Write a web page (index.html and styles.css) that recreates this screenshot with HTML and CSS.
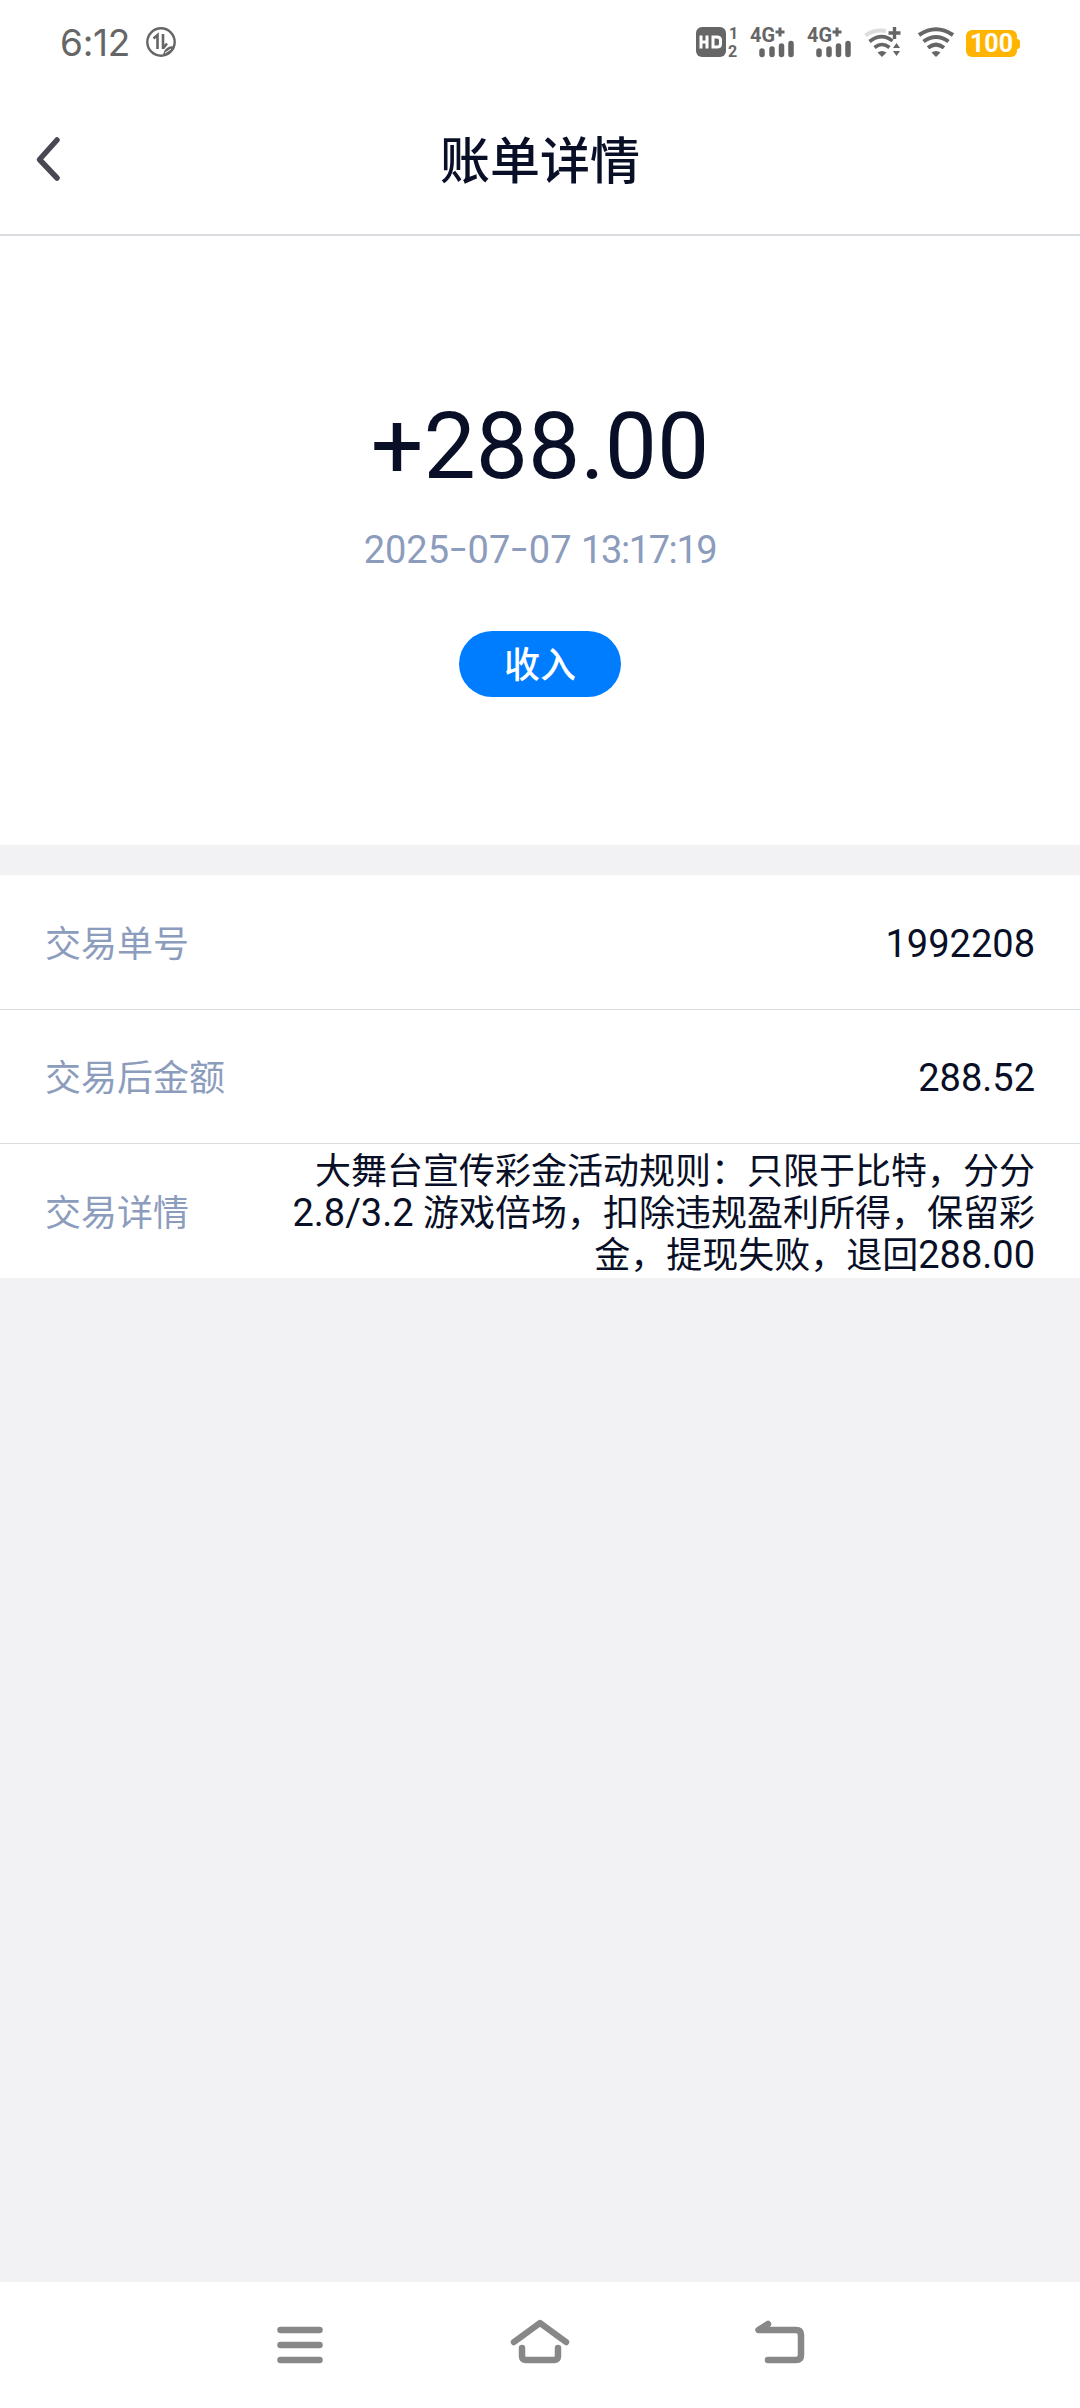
FILE: index.html
```html
<!DOCTYPE html>
<html lang="zh-CN">
<head>
    <meta charset="UTF-8">
    <meta name="viewport" content="width=device-width, initial-scale=1.0">
    <title>账单详情</title>
    <link rel="stylesheet" href="styles.css">
</head>
<body>
    <div class="status-bar">
        <span class="time">6:12</span>
        <svg class="data-icon" width="32" height="32" viewBox="0 0 32 32">
            <circle cx="16" cy="16" r="13.7" fill="none" stroke="#666" stroke-width="2.4"/>
            <path d="M8.500 12.500l4-3.500v14M18 8v15M18 22.500l4-5" fill="none" stroke="#666" stroke-width="2.600"/>
            <path d="M18 29c1-6 5-9 11-9-1 5-5 9-11 9z" fill="#666"/>
            <path d="M20 27l6-4" stroke="#fff" stroke-width="1"/>
        </svg>
        <div class="status-icons">
            <svg width="44" height="32" viewBox="0 0 44 32">
                <rect x="0" y="1" width="30" height="30" rx="6" fill="#666"/>
                <path d="M5 9.500v13M11 9.500v13M5 16h6M17 11h4q3.500 0 3.500 3v4q0 3-3.500 3h-4z" fill="none" stroke="#fff" stroke-width="3"/>
                <text class="sim" x="33" y="13">1</text>
                <text class="sim" x="32" y="31">2</text>
            </svg>
            <svg class="signal" width="45" height="32" viewBox="0 0 45 32">
                <text class="net" x="0" y="16" textLength="25" lengthAdjust="spacingAndGlyphs">4G</text>
                <path class="plus" d="M30 1.500v9M25.500 6h9"/>
                <path class="bars" d="M12 25v3.500M22 23v5.500M31.500 20v8.500M41 17.500v11"/>
            </svg>
            <svg class="signal second" width="45" height="32" viewBox="0 0 45 32">
                <text class="net" x="0" y="16" textLength="25" lengthAdjust="spacingAndGlyphs">4G</text>
                <path class="plus" d="M30 1.500v9M25.500 6h9"/>
                <path class="bars" d="M12 25v3.500M22 23v5.500M31.500 20v8.500M41 17.500v11"/>
            </svg>
            <svg class="wifi-plus" width="38" height="32" viewBox="0 0 38 32">
                <path d="M1.500 9.500Q10 3 22 5" fill="none" stroke="#ddd" stroke-width="4"/>
                <path d="M5.500 15.500Q18 6 28.500 15M10.500 21.500Q18 15.500 25.500 21.500" fill="none" stroke="#666" stroke-width="3.6"/>
                <path d="M13.500 26.500Q18 23.500 22.500 26.500L18 31z" fill="#666"/>
                <path d="M30.500 1v12M24.500 7h12" stroke="#666" stroke-width="3.4"/>
                <path d="M29 22l3.500-5 3.500 5zM29 25h7l-3.500 5z" fill="#666"/>
            </svg>
            <svg class="wifi" width="38" height="32" viewBox="0 0 38 32">
                <path d="M2 9Q19-2.500 36 9M6.500 15.500Q19 6.500 31.500 15.500M11 21.800Q19 15.500 27 21.800" fill="none" stroke="#666" stroke-width="4"/>
                <path d="M14.500 26.500Q19 23.500 23.500 26.500L19 31z" fill="#666"/>
            </svg>
            <div class="battery">100</div>
        </div>
    </div>

    <header class="header">
        <svg class="back" width="28" height="46" viewBox="0 0 28 46">
            <path d="M23 4L5.500 23.500 23 42" fill="none" stroke="#484852" stroke-width="5.500" stroke-linecap="round" stroke-linejoin="round"/>
        </svg>
        <h1>账单详情</h1>
    </header>

    <section class="summary">
        <div class="amount">+288.00</div>
        <div class="date">2025<i>-</i>07<i>-</i>07 <span class="clock">13:17:19</span></div>
        <div class="tag">收入</div>
    </section>

    <section class="details">
        <div class="row">
            <span class="label">交易单号</span>
            <span class="value"><span class="num">1992208</span></span>
        </div>
        <div class="row">
            <span class="label">交易后金额</span>
            <span class="value"><span class="num">288.52</span></span>
        </div>
        <div class="row">
            <span class="label">交易详情</span>
            <span class="value">大舞台宣传彩金活动规则：只限于比特，分分<br><span class="num">2.8/3.2 </span>游戏倍场，扣除违规盈利所得，保留彩<br>金，提现失败，退回<span class="num">288.00</span></span>
        </div>
    </section>

    <nav class="nav-bar">
        <svg width="60" height="50" viewBox="0 0 60 50">
            <path d="M10.500 13h39M10.500 28h39M10.500 43h39"/>
        </svg>
        <svg width="60" height="50" viewBox="0 0 60 50">
            <path d="M4 25L30 6l26 19M12 31v8q0 4 4 4h28q4 0 4-4v-8"/>
        </svg>
        <svg width="60" height="50" viewBox="0 0 60 50">
            <path d="M18 7L8.500 13H46q5 0 5 5v20q0 5-5 5H18"/>
        </svg>
    </nav>
</body>
</html>
```
FILE: styles.css
```css
* {
    box-sizing: border-box;
}
body {
    background: #f2f2f5;
    color: #080f26;
    font-family: Roboto, 'Noto Sans CJK SC', sans-serif;
    display: flex;
    flex-direction: column;
    height: 2408px;
    margin: 0;
}
svg {
    display: block;
    flex: none;
    overflow: visible;
}
.status-bar {
    background: #fff;
    height: 84px;
    display: flex;
    align-items: center;
    padding: 0 60px;
    color: #666;
}
.time {
    font-family: Inter, sans-serif;
    font-size: 37px;
    letter-spacing: -0.3px;
    width: 85px;
}
.status-icons {
    display: flex;
    align-items: center;
    margin-left: auto;
}
.sim {
    font: 700 16px/1 Roboto, sans-serif;
    fill: #666;
}
.net {
    font: 700 20px/1 Roboto, sans-serif;
    fill: #666;
}
.plus {
    stroke: #666;
    stroke-width: 3;
}
.bars {
    fill: none;
    stroke: #666;
    stroke-width: 5.5;
    stroke-linecap: round;
}
.signal {
    margin-left: 10px;
}
.second,
.wifi-plus {
    margin-left: 12px;
}
.wifi {
    margin-left: 15px;
}
.battery {
    position: relative;
    background: #ffb400;
    color: #fff;
    width: 51px;
    height: 27px;
    border-radius: 6px;
    margin: 3px 3px 0 11px;
    font: 700 25px/28px Roboto, sans-serif;
    text-align: center;
}
.battery::after {
    content: '';
    position: absolute;
    right: -3px;
    top: 9px;
    width: 4px;
    height: 10px;
    border-radius: 0 3px 3px 0;
    background: #ffb400;
}
.header {
    background: #fff;
    height: 152px;
    border-bottom: 2px solid #dadce2;
    display: grid;
    grid-template-columns: 100px 1fr 100px;
    align-items: center;
}
.back {
    margin-left: 34px;
}
h1 {
    margin: 0;
    padding-top: 6px;
    font-size: 50px;
    font-weight: 500;
    line-height: 70px;
    text-align: center;
}
.summary {
    background: #fff;
    height: 609px;
    padding-top: 156px;
    display: flex;
    flex-direction: column;
    align-items: center;
}
.amount {
    font-size: 93px;
    line-height: 110px;
}
.date {
    margin-top: 25px;
    color: #8c9cbc;
    font-size: 38px;
    line-height: 46px;
}
.date i {
    display: inline-block;
    font-style: normal;
    transform: translateY(-2px) scaleX(1.5);
    margin: 0 4px;
}
.clock {
    letter-spacing: -1.4px;
}
.tag {
    margin-top: 58px;
    width: 162px;
    height: 66px;
    padding-top: 2px;
    border-radius: 33px;
    background: #007dff;
    color: #fff;
    font-size: 36px;
    font-weight: 500;
    line-height: 66px;
    text-align: center;
}
.details {
    margin-top: 30px;
}
.row {
    background: #fff;
    height: 134px;
    padding: 5px 45px 0;
    border-bottom: 1px solid #d8dde0;
    display: flex;
    align-items: center;
    justify-content: space-between;
    font-size: 36px;
    line-height: 42px;
}
.row:first-child {
    height: 135px;
}
.row:last-child {
    border-bottom: none;
}
.label {
    color: #8c9cbc;
}
.value {
    text-align: right;
}
.num {
    font-size: 38px;
    line-height: 1;
}
.nav-bar {
    background: #fff;
    height: 126px;
    margin-top: auto;
    display: flex;
    justify-content: center;
    gap: 180px;
    padding-top: 35px;
}
.nav-bar path {
    fill: none;
    stroke: #888;
    stroke-width: 6.5;
    stroke-linecap: round;
    stroke-linejoin: round;
}
```
